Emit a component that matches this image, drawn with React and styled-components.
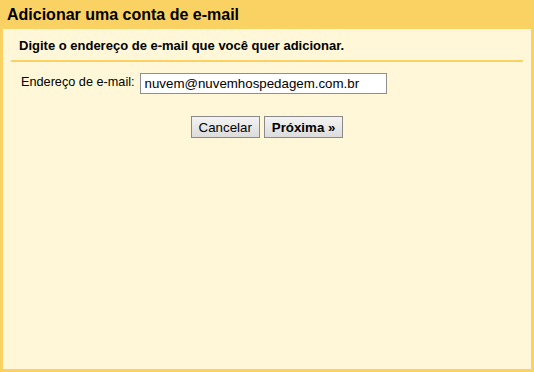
import React, { useState } from 'react';
import styled, { createGlobalStyle } from 'styled-components';

const Global = createGlobalStyle`
  html, body {
    margin: 0;
    padding: 0;
    background: #fad163;
  }
  body {
    font-family: "Liberation Sans", Arial, sans-serif;
    color: #000;
  }
`;

const Window = styled.div`
  width: 534px;
  height: 372px;
  box-sizing: border-box;
  background: #fad163;
  padding: 0 3px 3px 3px;
  display: flex;
  flex-direction: column;
`;

const TitleBar = styled.div`
  height: 29px;
  display: flex;
  align-items: center;
  padding-left: 4px;
  font-size: 16px;
  font-weight: bold;
`;

const Body = styled.div`
  flex: 1;
  background: #fff7d7;
  padding: 0 8px;
`;

const Intro = styled.div`
  padding: 9px 8px 0;
  height: 22px;
  font-size: 13px;
  font-weight: bold;
  border-bottom: 2px solid #fad163;
`;

const FieldRow = styled.div`
  display: flex;
  align-items: flex-start;
  margin-top: 11px;
  padding-left: 10px;
  gap: 5px;
`;

const Label = styled.label`
  font-size: 12.7px;
  padding-top: 2px;
`;

const Input = styled.input`
  width: 247px;
  height: 21px;
  box-sizing: border-box;
  border: 1px solid #8f8f8f;
  background: #fff;
  padding: 0 4px;
  font-family: "Liberation Sans", Arial, sans-serif;
  font-size: 13.3px;
  color: #000;
  outline: none;
`;

const Actions = styled.div`
  display: flex;
  justify-content: center;
  gap: 4px;
  margin-top: 22px;
`;

const Button = styled.button`
  height: 22px;
  padding: 0 7px;
  border: 1px solid #8a8a8a;
  background: linear-gradient(#f3f3f3, #dcdcdc);
  font-family: "Liberation Sans", Arial, sans-serif;
  font-size: 13.3px;
  font-weight: ${p => (p.primary ? 'bold' : 'normal')};
  color: #000;
  cursor: pointer;
`;

export default function App() {
  const [email, setEmail] = useState('nuvem@nuvemhospedagem.com.br');
  return (
    <Window>
      <Global />
      <TitleBar>Adicionar uma conta de e-mail</TitleBar>
      <Body>
        <Intro>Digite o endereço de e-mail que você quer adicionar.</Intro>
        <FieldRow>
          <Label htmlFor="email">Endereço de e-mail:</Label>
          <Input id="email" value={email} onChange={e => setEmail(e.target.value)} />
        </FieldRow>
        <Actions>
          <Button>Cancelar</Button>
          <Button primary>Próxima »</Button>
        </Actions>
      </Body>
    </Window>
  );
}
